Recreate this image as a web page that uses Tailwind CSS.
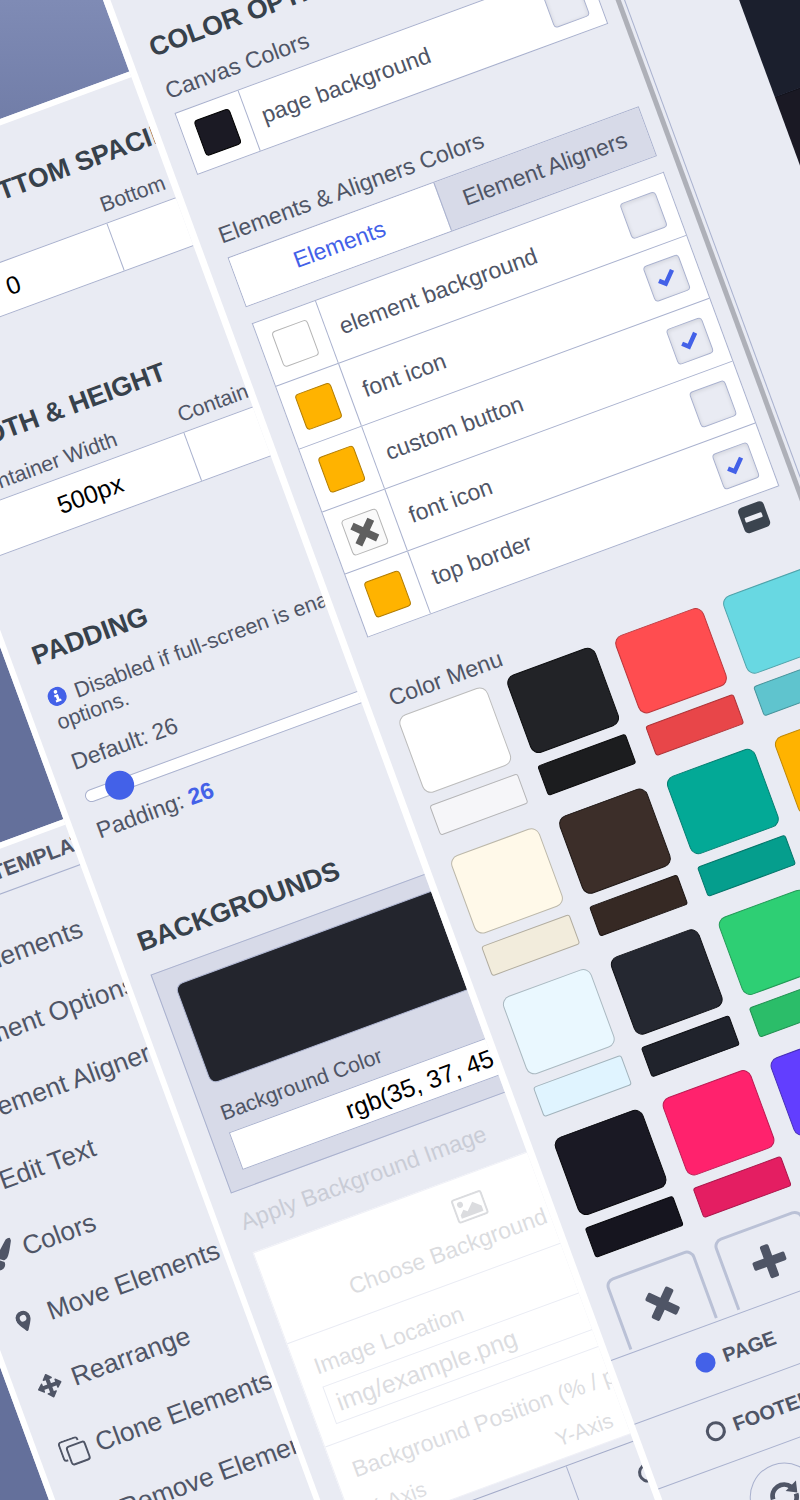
<!DOCTYPE html>
<html lang="en">
<head>
<meta charset="utf-8">
<title>Editor Panels</title>
<script src="https://cdn.jsdelivr.net/npm/@tailwindcss/browser@4"></script>
</head>
<body class="overflow-hidden">
<svg class="hidden">
  <symbol id="check" viewBox="0 0 24 20"><path d="M3.800 9.800 L9.200 14.800 L19.800 4" fill="none" stroke="#4361e8" stroke-width="4.500" stroke-linejoin="miter"/></symbol>
</svg>
<div class="relative h-[1500px] w-[800px] overflow-hidden bg-linear-to-b from-[#7f8bb5] via-[#64709b] via-16% to-[#64709b] font-['Liberation_Sans',Arial,sans-serif] text-[23.1px] leading-[30px] whitespace-nowrap text-[#4f5566]">

  <!-- Left: template menu -->
  <section class="absolute top-[904.7px] left-[-170.4px] h-[800px] w-[420px] origin-top-left -rotate-[20.2deg] border-t-6 border-l-6 border-white bg-[#e9ebf3]">
    <div class="flex h-[43px] items-center border-b border-[#a9b1ce] pl-[157px] text-[21px] font-bold">TEMPLATES</div>
    <ul class="mt-[24.5px] text-[26.4px]">
      <li class="flex h-[69.8px] items-center"><span class="w-[58px]"></span>Add Elements</li>
      <li class="flex h-[69.8px] items-center"><span class="w-[58px]"></span>Element Options</li>
      <li class="flex h-[69.8px] items-center"><span class="w-[58px]"></span>Element Aligners</li>
      <li class="flex h-[69.8px] items-center"><span class="w-[58px]"></span>Edit Text</li>
      <li class="flex h-[69.8px] items-center">
        <svg class="mr-[9px] ml-[20px] h-[28px] w-[28px]" viewBox="0 0 512 512" fill="#4f5566"><path d="M167 309c-39 0-70 31-70 70 0 52-58 56-58 90 38 33 70 43 107 43 66 0 120-43 120-110l-1-11zM458 0c-15 0-28 7-40 16C213 199 192 214 192 269c0 14 3 27 8 39l62 45c7 1 13 2 20 2 62 0 96-45 220-276 8-15 16-32 16-49 0-20-19-30-40-30z"/></svg>Colors</li>
      <li class="flex h-[69.8px] items-center">
        <svg class="mr-[18px] ml-[25px] h-[21.5px] w-[15px]" viewBox="0 0 15 21.5"><path fill="#4f5566" fill-rule="evenodd" d="M7.500 0A7.500 7.500 0 0 1 15 7.500C15 10.500 12.500 14.500 8.600 20.300Q7.500 21.900 6.400 20.300C2.500 14.500 0 10.500 0 7.500A7.500 7.500 0 0 1 7.500 0ZM7.500 4.200a3.300 3.300 0 1 0 0 6.600a3.300 3.300 0 1 0 0-6.600Z"/></svg>Move Elements</li>
      <li class="flex h-[69.8px] items-center">
        <svg class="mr-[11px] ml-[20.5px] h-[26px] w-[26.5px]" viewBox="0 0 26 26"><g fill="#4f5566" stroke="#4f5566" stroke-width="1.400" stroke-linejoin="round"><path d="M13 1.200 17.200 5.800H8.800Z"/><path d="M13 24.800 17.200 20.200H8.800Z"/><path d="M1.200 13 5.800 8.800V17.200Z"/><path d="M24.800 13 20.200 8.800V17.200Z"/></g><path d="M13 4V22M4 13H22" stroke="#4f5566" stroke-width="4"/></svg>Rearrange</li>
      <li class="flex h-[69.8px] items-center">
        <svg class="mr-[9.5px] ml-[20.500px] h-[27.5px] w-[28px]" viewBox="0 0 27 27" fill="none" stroke="#4f5566" stroke-width="1.900"><rect x="7" y="7.500" width="18.500" height="18.500" rx="2.500"/><path d="M4.500 20H3.500A2.500 2.500 0 0 1 1 17.500V3.500A2.500 2.500 0 0 1 3.500 1H17.500A2.500 2.500 0 0 1 20 3.500V4.500"/></svg>Clone Elements</li>
      <li class="flex h-[69.8px] items-center"><span class="w-[58px]"></span>Remove Elements</li>
    </ul>
  </section>

  <!-- Middle: page settings -->
  <section class="absolute top-[181.6px] left-[-171.4px] flex h-[1620px] w-[900px] origin-top-left -rotate-[20.2deg] flex-col border-t-6 border-l-6 border-white bg-[#e9ebf3]">
    <div class="h-[1452.500px] w-[500px] shrink-0 overflow-hidden pt-[46.300px] pl-[21.500px]">
      <h2 class="text-[26.7px] leading-[32px] font-bold text-[#37414b]">TOP &amp; BOTTOM SPACING</h2>
      <div class="mt-[17.6px] grid w-[439px] grid-cols-2 text-[21.4px] leading-[28px]"><span>Top</span><span>Bottom</span></div>
      <div class="mt-[3.7px] grid h-[52.3px] w-[439px] grid-cols-2 divide-x divide-[#a9b1ce] border border-[#a9b1ce] bg-white text-center text-[25px] leading-[50px] text-black"><span>0</span><span></span></div>

      <h2 class="mt-[90.7px] text-[26.7px] leading-[32px] font-bold text-[#37414b]">WIDTH &amp; HEIGHT</h2>
      <div class="mt-[17px] grid w-[439px] grid-cols-2 text-[21.4px] leading-[28px]"><span>Container Width</span><span>Container Height</span></div>
      <div class="mt-[3.7px] grid h-[52.3px] w-[439px] grid-cols-2 divide-x divide-[#a9b1ce] border border-[#a9b1ce] bg-white text-center text-[25px] leading-[50px] text-black"><span>500px</span><span></span></div>

      <h2 class="mt-[90.8px] text-[26.7px] leading-[32px] font-bold text-[#37414b]">PADDING</h2>
      <p class="mt-[18.2px] w-[440px] text-[21.5px] leading-[24.4px]"><svg class="mr-[9px] -ml-[0.5px] inline-block h-[19px] w-[19px] align-[-1.5px]" viewBox="0 0 20 20"><circle cx="10" cy="10" r="10" fill="#4361e8"/><circle cx="10" cy="4.900" r="1.900" fill="#fff"/><path d="M7.200 8H11.500V13.500H13V15.800H7V13.500H8.500V10.200H7.200Z" fill="#fff"/></svg>Disabled if full-screen is enabled in<br>options.</p>
      <div class="mt-[15px]">Default: 26</div>
      <div class="mt-[15.5px] flex h-[13px] w-[439px] items-center rounded-full border border-[#a9b1ce] bg-white pl-[21px]"><span class="h-[29px] w-[29px] shrink-0 rounded-full bg-[#4361e8]"></span></div>
      <div class="mt-[14.6px]">Padding: <b class="text-[#4361e8]">26</b></div>

      <h2 class="mt-[87.8px] text-[26.7px] leading-[32px] font-bold text-[#37414b]">BACKGROUNDS</h2>
      <div class="mt-[17.6px] h-[233.5px] w-[439px] border border-[#a9b1ce] bg-[#d7dae8] px-[18px] pt-[17.5px]">
        <div class="h-[106px] rounded-[8px] border border-[#b2b9d4] bg-[#23252d]"></div>
        <div class="mt-[16.8px] text-[21.3px] leading-[28px]">Background Color</div>
        <div class="mt-[6px] h-[40px] border border-[#a9b1ce] bg-white text-center text-[25px] leading-[38px] text-black">rgb(35, 37, 45)</div>
      </div>
      <div class="mt-[15.5px] text-[23.3px] opacity-20">Apply Background Image</div>
      <div class="mt-[17.5px] h-[301px] w-[439px] border border-[#f0f1f7] bg-white">
        <div class="flex h-[97px] flex-col items-center border-b border-[#eaecf4] pt-[18px]">
          <svg class="h-[26px] w-[33px] opacity-20" viewBox="0 0 33 26"><rect x="1.300" y="1.300" width="30.400" height="23.400" rx="2" fill="none" stroke="#4f5566" stroke-width="2"/><circle cx="8" cy="7.800" r="3" fill="#4f5566"/><path fill="#4f5566" d="M5 21.500V18L9.500 13.500L13 16.500L20.500 9L28 16V21.500Z"/></svg>
          <span class="mt-[5.500px] opacity-20">Choose Background Image</span>
        </div>
        <div class="h-[110px] border-b border-[#eaecf4] px-[18px] pt-[16px]">
          <div class="opacity-20">Image Location</div>
          <div class="mt-[5.500px] h-[40.5px] border border-[#eaecf4] pl-[8px] text-[25px] leading-[38px]"><span class="opacity-20">img/example.png</span></div>
        </div>
        <div class="px-[18.500px] pt-[16px]">
          <div class="opacity-20">Background Position (% / px)</div>
          <div class="mt-[13px] grid grid-cols-2 text-[21.4px] leading-[28px] opacity-20"><span>X-Axis</span><span class="pl-px">Y-Axis</span></div>
          <div class="mt-[6px] h-10 border border-[#eaecf4]"></div>
        </div>
      </div>
    </div>
    <div class="flex h-[69px] shrink-0 border-t border-[#a3abc9]">
      <div class="w-[242.5px] border-r border-[#a9b1ce]"></div>
      <div class="flex items-center pl-[64.5px]"><span class="h-5 w-5 rounded-full border-3 border-[#4f5566]"></span></div>
    </div>
  </section>

  <!-- Canvas behind the right panel -->
  <div class="absolute top-0 left-[103px] flex h-[700px] w-[900px] origin-top-left -rotate-[20.2deg] flex-col pl-[590px]">
    <div class="h-[323px] bg-[#1b1f2d]"></div>
    <div class="grow border-t border-[#11121b] bg-[#1a1924]"></div>
  </div>

  <!-- Right: colour options -->
  <section class="absolute top-[0.6px] left-[103.4px] -mt-5 -ml-[7.36px] h-[1770px] w-[597px] origin-top-left -rotate-[20.2deg] border-l-7 border-white bg-[#e9ebf3] pt-[21.3px]">
    <div class="flex h-[1450.5px] pb-[3px]">
      <div class="w-[473.5px] shrink-0 overflow-hidden pt-[44.3px] pl-[20.5px]">
        <h2 class="text-[26.7px] leading-[32px] font-bold text-[#37414b]">COLOR OPTIONS</h2>
        <div class="mt-[15.9px]">Canvas Colors</div>
        <div class="mt-[8px] flex h-[66px] w-[438.5px] items-center border border-[#a9b1ce] bg-white pr-[13.500px]">
          <div class="flex h-full w-[67px] items-center justify-center border-r border-[#a9b1ce]"><span class="h-[38px] w-[38px] rounded-[4px] border border-black bg-[#1b1a24]"></span></div>
          <span class="grow pl-[14px]">page background</span>
          <span class="h-[38px] w-[38px] rounded-[4px] border border-[#a9b1ce] bg-[#e9ebf3] shadow-[inset_0_1px_4px_#0000001c]"></span>
        </div>

        <div class="mt-[49.5px] text-[23.2px]">Elements &amp; Aligners Colors</div>
        <div class="mt-[8px] grid h-[53px] w-[438.5px] grid-cols-2 border border-[#a9b1ce] text-center leading-[51px]">
          <span class="bg-white text-[#4361e8]">Elements</span><span class="border-l border-[#a9b1ce] bg-[#d7dae8]">Element Aligners</span>
        </div>

        <div class="mt-[17.5px] w-[439px] border-x border-t border-[#a9b1ce] bg-white">
          <div class="flex h-[66.75px] items-center border-b border-[#a9b1ce] pr-[13.500px]">
            <div class="flex h-full w-[67px] items-center justify-center border-r border-[#a9b1ce]"><span class="h-[38px] w-[38px] rounded-[4px] border border-[#b5b5b5] bg-white"></span></div>
            <span class="grow pl-[14px]">element background</span>
            <span class="h-[38px] w-[38px] rounded-[4px] border border-[#a9b1ce] bg-[#e9ebf3] shadow-[inset_0_1px_4px_#0000001c]"></span>
          </div>
          <div class="flex h-[66.75px] items-center border-b border-[#a9b1ce] pr-[13.500px]">
            <div class="flex h-full w-[67px] items-center justify-center border-r border-[#a9b1ce]"><span class="h-[38px] w-[38px] rounded-[4px] border border-[#b27c00] bg-[#ffb300]"></span></div>
            <span class="grow pl-[14px]">font icon</span>
            <span class="flex h-[38px] w-[38px] items-center justify-center rounded-[4px] border border-[#a9b1ce] bg-[#e9ebf3] shadow-[inset_0_1px_4px_#0000001c]"><svg class="h-5 w-6"><use href="#check"/></svg></span>
          </div>
          <div class="flex h-[66.75px] items-center border-b border-[#a9b1ce] pr-[13.500px]">
            <div class="flex h-full w-[67px] items-center justify-center border-r border-[#a9b1ce]"><span class="h-[38px] w-[38px] rounded-[4px] border border-[#b27c00] bg-[#ffb300]"></span></div>
            <span class="grow pl-[14px]">custom button</span>
            <span class="flex h-[38px] w-[38px] items-center justify-center rounded-[4px] border border-[#a9b1ce] bg-[#e9ebf3] shadow-[inset_0_1px_4px_#0000001c]"><svg class="h-5 w-6"><use href="#check"/></svg></span>
          </div>
          <div class="flex h-[66.75px] items-center border-b border-[#a9b1ce] pr-[13.500px]">
            <div class="flex h-full w-[67px] items-center justify-center border-r border-[#a9b1ce]"><span class="flex h-[38px] w-[38px] items-center justify-center rounded-[4px] border border-[#b5b5b5] bg-[#fafafa]"><svg class="h-8 w-8" viewBox="0 0 32 32"><path d="M6 6 26 26M26 6 6 26" stroke="#5f5f5f" stroke-width="7.500"/></svg></span></div>
            <span class="grow pl-[14px]">font icon</span>
            <span class="h-[38px] w-[38px] rounded-[4px] border border-[#a9b1ce] bg-[#e9ebf3] shadow-[inset_0_1px_4px_#0000001c]"></span>
          </div>
          <div class="flex h-[66.75px] items-center border-b border-[#a9b1ce] pr-[13.500px]">
            <div class="flex h-full w-[67px] items-center justify-center border-r border-[#a9b1ce]"><span class="h-[38px] w-[38px] rounded-[4px] border border-[#b27c00] bg-[#ffb300]"></span></div>
            <span class="grow pl-[14px]">top border</span>
            <span class="flex h-[38px] w-[38px] items-center justify-center rounded-[4px] border border-[#a9b1ce] bg-[#e9ebf3] shadow-[inset_0_1px_4px_#0000001c]"><svg class="h-5 w-6"><use href="#check"/></svg></span>
          </div>
        </div>

        <div class="mt-[7px] ml-[391px] flex h-[27px] w-[27px] items-center justify-center rounded-[4.500px] bg-[#3b444f]"><span class="h-[5px] w-[18px] rounded-[1px] bg-[#eceef5]"></span></div>
        <div class="mt-[15.500px]">Color Menu</div>
        <div class="mt-[5.500px] grid w-[441px] grid-cols-[repeat(4,94.5px)] gap-x-[20.5px] gap-y-[24px]">
          <div><div class="h-[82.5px] rounded-[9px] border border-[#bcbcbc] bg-white"></div><div class="mt-[11.5px] h-[32px] rounded-[3px] border border-[#b4b4b6] bg-[#f6f6f9]"></div></div>
          <div><div class="h-[82.5px] rounded-[9px] border border-[#0c0d0f] bg-[#222327]"></div><div class="mt-[11.5px] h-[32px] rounded-[3px] border border-[#0b0b0c] bg-[#1c1d1f]"></div></div>
          <div><div class="h-[82.5px] rounded-[9px] border border-[#bb363b] bg-[#ff4d50]"></div><div class="mt-[11.5px] h-[32px] rounded-[3px] border border-[#ae3337] bg-[#e84649]"></div></div>
          <div><div class="h-[82.5px] rounded-[9px] border border-[#4fa3aa] bg-[#68d8e2]"></div><div class="mt-[11.5px] h-[32px] rounded-[3px] border border-[#45929a] bg-[#5fc4ce]"></div></div>

          <div><div class="h-[82.5px] rounded-[9px] border border-[#bcb8aa] bg-[#fff9e9]"></div><div class="mt-[11.5px] h-[32px] rounded-[3px] border border-[#b1ac9f] bg-[#f2ecdc]"></div></div>
          <div><div class="h-[82.5px] rounded-[9px] border border-[#1d1614] bg-[#3c2e29]"></div><div class="mt-[11.5px] h-[32px] rounded-[3px] border border-[#1b1412] bg-[#362924]"></div></div>
          <div><div class="h-[82.5px] rounded-[9px] border border-[#027e70] bg-[#03a996]"></div><div class="mt-[11.5px] h-[32px] rounded-[3px] border border-[#03766a] bg-[#059e8d]"></div></div>
          <div><div class="h-[82.5px] rounded-[9px] border border-[#bf8600] bg-[#ffb300]"></div><div class="mt-[11.5px] h-[32px] rounded-[3px] border border-[#b37d00] bg-[#e8a300]"></div></div>

          <div><div class="h-[82.5px] rounded-[9px] border border-[#aab9c1] bg-[#eaf8ff]"></div><div class="mt-[11.5px] h-[32px] rounded-[3px] border border-[#a2b3bc] bg-[#e0f4ff]"></div></div>
          <div><div class="h-[82.5px] rounded-[9px] border border-[#0f1015] bg-[#252831]"></div><div class="mt-[11.5px] h-[32px] rounded-[3px] border border-[#0d0e13] bg-[#20232c]"></div></div>
          <div><div class="h-[82.5px] rounded-[9px] border border-[#229a56] bg-[#2ecf74]"></div><div class="mt-[11.5px] h-[32px] rounded-[3px] border border-[#1f8f4f] bg-[#2bbd69]"></div></div>
          <div></div>

          <div><div class="h-[82.5px] rounded-[9px] border border-[#08080c] bg-[#1a1924]"></div><div class="mt-[11.5px] h-[32px] rounded-[3px] border border-[#06060a] bg-[#16151f]"></div></div>
          <div><div class="h-[82.5px] rounded-[9px] border border-[#bd1a52] bg-[#ff226d]"></div><div class="mt-[11.5px] h-[32px] rounded-[3px] border border-[#ab154a] bg-[#e41e62]"></div></div>
          <div><div class="h-[82.5px] rounded-[9px] border border-[#462db8] bg-[#623eff]"></div><div class="mt-[11.5px] h-[32px] rounded-[3px] border border-[#402aa8] bg-[#5838e6]"></div></div>
          <div></div>

          <div class="flex h-[84px] items-center justify-center rounded-[9px] border-3 border-[#bac1d6]"><svg class="h-9 w-9" viewBox="0 0 36 36"><g transform="rotate(45 18 18)" fill="#4f5566"><rect x="0.500" y="13.500" width="35" height="9" rx="1.800"/><rect x="13.500" y="0.500" width="9" height="35" rx="1.800"/></g></svg></div>
          <div class="flex h-[84px] items-center justify-center rounded-[9px] border-3 border-[#bac1d6]"><svg class="mb-[7px] h-9 w-9" viewBox="0 0 36 36"><rect x="1" y="13.500" width="34" height="9" rx="2" fill="#4f5566"/><rect x="13.500" y="1" width="9" height="34" rx="2" fill="#4f5566"/></svg></div>
        </div>
      </div>
      <div class="mr-[3px] -mb-[3px] w-[5px] bg-[#aeb0b8]"></div>
      <div class="-mb-[3px] w-px bg-[#a9b1ce]"></div>
    </div>
    <div class="flex h-[68.5px] items-center gap-[9px] border-t border-[#a9b1ce] pl-[78px] text-[20px] font-bold"><span class="h-5 w-5 rounded-full bg-[#4361e8]"></span>PAGE</div>
    <div class="flex h-[68.5px] items-center gap-[9px] border-t border-[#a9b1ce] pl-[64px] text-[20px] font-bold"><span class="h-5 w-5 rounded-full border-3 border-[#4f5566]"></span>FOOTER</div>
    <div class="border-t border-[#a9b1ce] pt-[16px] pl-[81px]">
      <div class="flex h-[69px] w-[69px] items-center justify-center rounded-full border border-[#a9b1ce]">
        <svg class="h-[34px] w-[34px] rotate-[20.2deg]" viewBox="-17 -17 34 34"><g fill="none" stroke="#4f5566" stroke-width="4.800"><path d="M-11.500 3A11.500 11.500 0 0 1 6.500 -9.500"/><path d="M11.500 -3A11.500 11.500 0 0 1 -6.500 9.500"/></g><g fill="#4f5566"><path d="M11.300 -16 12.700 -4 1 -5.500Z"/><path d="M-11.300 16 -12.700 4 -1 5.500Z"/></g></svg>
      </div>
    </div>
  </section>
</div>
</body>
</html>
